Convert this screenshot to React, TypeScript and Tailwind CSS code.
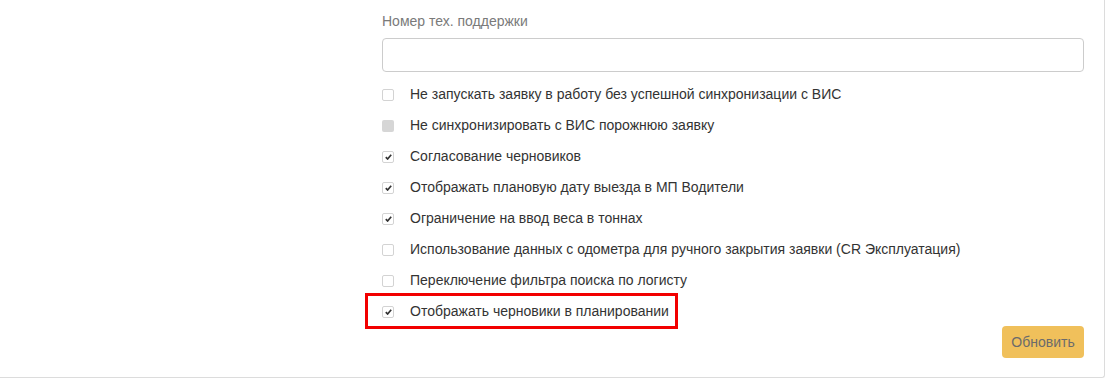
import React from 'react'

const OPTIONS: { label: string; state: 'off' | 'on' | 'disabled' }[] = [
  { label: 'Не запускать заявку в работу без успешной синхронизации с ВИС', state: 'off' },
  { label: 'Не синхронизировать с ВИС порожнюю заявку', state: 'disabled' },
  { label: 'Согласование черновиков', state: 'on' },
  { label: 'Отображать плановую дату выезда в МП Водители', state: 'on' },
  { label: 'Ограничение на ввод веса в тоннах', state: 'on' },
  { label: 'Использование данных с одометра для ручного закрытия заявки (CR Эксплуатация)', state: 'off' },
  { label: 'Переключение фильтра поиска по логисту', state: 'off' },
  { label: 'Отображать черновики в планировании', state: 'on' },
]

function Checkbox({ state }: { state: 'off' | 'on' | 'disabled' }) {
  if (state === 'disabled') {
    return <span className="w-[12px] h-[12px] rounded-[2px] bg-[#d6d6d6] flex-shrink-0" />
  }
  return (
    <span className="w-[12px] h-[12px] rounded-[2px] border border-[#d3d3d3] bg-white flex items-center justify-center flex-shrink-0">
      {state === 'on' && (
        <svg width="7" height="6" viewBox="0 0 7 6">
          <path d="M0.8 3.2 L2.6 5 L6.2 0.8" fill="none" stroke="#333" strokeWidth="1.7" />
        </svg>
      )}
    </span>
  )
}

export default function App() {
  return (
    <div className="w-[1107px] h-[379px] bg-white font-['Liberation_Sans',Arial,sans-serif] text-[14px]">
      <div className="relative w-[1105px] h-[378px] border-r border-b border-[#dcdcdc] rounded-br-[3px] pl-[382px] pr-[20px] pt-[11px]">
        <div className="text-[#7a7a7a] leading-[20px]">Номер тех. поддержки</div>
        <div className="mt-[7px] h-[34px] border border-[#cccccc] rounded-[4px]" />

        <div className="mt-[7px]">
          {OPTIONS.map((o) => (
            <div key={o.label} className="h-[31px] flex items-center gap-[16px] text-[#333]">
              <Checkbox state={o.state} />
              <span>{o.label}</span>
            </div>
          ))}
        </div>

        <div className="flex justify-end mt-[-1px]">
          <button className="h-[32px] w-[82px] rounded-[4px] bg-[#f0c05b] text-[#6b6b6b] text-[14px]">
            Обновить
          </button>
        </div>

        {/* annotation frame */}
        <div className="absolute left-[365px] top-[293px] w-[313px] h-[36px] border-[3px] border-[#f20000] pointer-events-none" />
      </div>
    </div>
  )
}
